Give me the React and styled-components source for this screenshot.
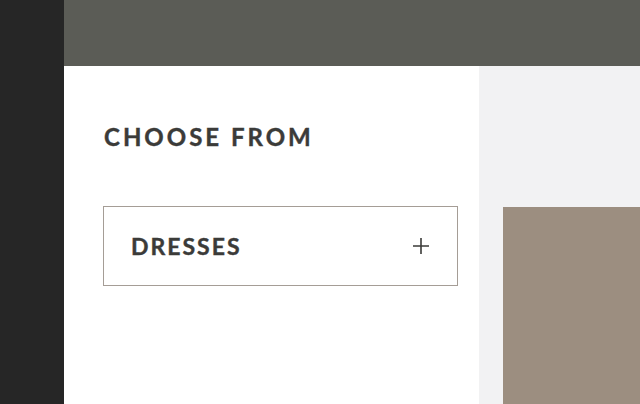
import React from "react";
import styled, { createGlobalStyle } from "styled-components";

const GlobalStyle = createGlobalStyle`
  html, body {
    margin: 0;
    padding: 0;
    height: 100%;
    overflow: hidden;
  }
  body {
    font-family: Lato, "Open Sans", sans-serif;
  }
  #root {
    height: 100%;
  }
`;

const Page = styled.div`
  display: grid;
  grid-template-columns: 64px 1fr;
  height: 404px;
  width: 640px;
`;

const SideStrip = styled.div`
  background: #262626;
`;

const Main = styled.div`
  display: grid;
  grid-template-rows: 66px 1fr;
  min-width: 0;
`;

const TopBar = styled.div`
  background: #5b5c56;
`;

const Body = styled.div`
  display: grid;
  grid-template-columns: 415px 1fr;
  min-height: 0;
`;

const Filters = styled.div`
  background: #ffffff;
  padding: 55px 20px 0 40px;
`;

const Heading = styled.h2`
  margin: 0;
  font-family: Lato, sans-serif;
  font-weight: 700;
  font-size: 24px;
  line-height: 32px;
  letter-spacing: 3px;
  color: #3b3b39;
  -webkit-text-stroke: 0.4px #3b3b39;
`;

const Option = styled.div`
  margin-top: 53px;
  margin-left: -1px;
  width: 355px;
  height: 80px;
  box-sizing: border-box;
  border: 1px solid #a59d96;
  display: flex;
  align-items: center;
  justify-content: space-between;
  padding: 0 27px;
`;

const OptionLabel = styled.span`
  font-family: Lato, sans-serif;
  font-weight: 700;
  font-size: 23px;
  letter-spacing: 2px;
  color: #3b3b39;
  -webkit-text-stroke: 0.4px #3b3b39;
`;

const Preview = styled.div`
  background: #f2f2f3;
  padding: 141px 0 0 24px;
  overflow: hidden;
`;

const Swatch = styled.div`
  background: #9c8e80;
  height: 100%;
`;

function PlusIcon() {
  return (
    <svg width="18" height="18" viewBox="0 0 18 18" fill="none">
      <path d="M9 1v16M1 9h16" stroke="#3b3b39" strokeWidth="1.6" />
    </svg>
  );
}

export default function App() {
  return (
    <>
      <GlobalStyle />
      <Page>
        <SideStrip />
        <Main>
          <TopBar />
          <Body>
            <Filters>
              <Heading>CHOOSE FROM</Heading>
              <Option>
                <OptionLabel>DRESSES</OptionLabel>
                <PlusIcon />
              </Option>
            </Filters>
            <Preview>
              <Swatch />
            </Preview>
          </Body>
        </Main>
      </Page>
    </>
  );
}
